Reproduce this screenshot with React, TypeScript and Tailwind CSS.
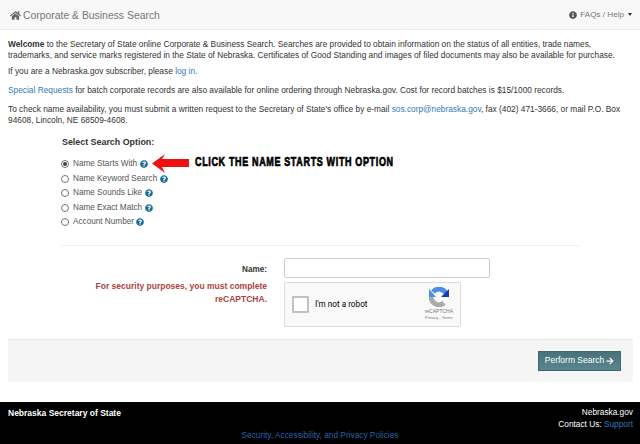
import React from "react";
import { FaHome, FaInfoCircle, FaQuestionCircle, FaArrowRight } from "react-icons/fa";

const options = ["Name Starts With", "Name Keyword Search", "Name Sounds Like", "Name Exact Match", "Account Number"];

function Option({ label, checked }: { label: string; checked?: boolean }) {
  return (
    <div className="flex h-[14.5px] items-center">
      <span className="flex h-[8px] w-[8px] items-center justify-center rounded-full border border-[#767676] bg-white">
        {checked && <span className="h-[4px] w-[4px] rounded-full bg-[#444]" />}
      </span>
      <span className="ml-[4px] text-[8.2px] leading-[14px] text-[#555]">{label}</span>
      <FaQuestionCircle className="ml-[2.5px] text-[8px] text-[#1b6d94]" />
    </div>
  );
}

export default function App() {
  return (
    <div className="relative flex h-[444px] w-[640px] flex-col overflow-hidden bg-white font-['Liberation_Sans',Arial,sans-serif] text-[8.33px] leading-[11px] text-[#333]">
      <header className="flex h-[30px] shrink-0 items-center justify-between border-b border-[#e7e7e7] bg-[#f8f8f8] pl-[10px] pr-[8px]">
        <div className="flex items-center pt-[1px] text-[10.4px] text-[#777]">
          <FaHome className="mr-[2px] text-[11px] text-[#666]" />
          <span>Corporate &amp; Business Search</span>
        </div>
        <div className="flex items-center text-[8.1px] text-[#777]">
          <FaInfoCircle className="mr-[3px] text-[8px] text-[#555]" />
          <span>FAQs / Help</span>
          <span className="ml-[4px] h-0 w-0 border-x-[2.5px] border-t-[3px] border-x-transparent border-t-[#333]" />
        </div>
      </header>

      <section className="px-[8px] pt-[9px]">
        <p>
          <b>Welcome</b> to the Secretary of State online Corporate &amp; Business Search. Searches are provided to obtain information on the status of all entities, trade names,
          <br />
          trademarks, and service marks registered in the State of Nebraska. Certificates of Good Standing and images of filed documents may also be available for purchase.
        </p>
        <p className="mt-[5px]">
          If you are a Nebraska.gov subscriber, please <a className="text-[#337ab7]">log in.</a>
        </p>
        <p className="mt-[8px]">
          <a className="text-[#337ab7]">Special Requests</a> for batch corporate records are also available for online ordering through Nebraska.gov. Cost for record batches is $15/1000 records.
        </p>
        <p className="mt-[8px]">
          To check name availability, you must submit a written request to the Secretary of State's office by e-mail <a className="text-[#337ab7]">sos.corp@nebraska.gov</a>, fax (402) 471-3666, or mail P.O. Box
          <br />
          94608, Lincoln, NE 68509-4608.
        </p>
      </section>

      <section className="relative ml-[61px] mt-[9px] w-[519px]">
        <div className="ml-[1px] text-[8.9px] font-bold leading-[14px]">Select Search Option:</div>
        <div className="mt-[8px] flex flex-col">
          {options.map((o, i) => (
            <Option key={o} label={o} checked={i === 0} />
          ))}
        </div>
        <div className="mt-[15px] border-t border-[#eee]" />
        <svg className="absolute left-[91px] top-[19px]" width="37" height="19" viewBox="0 0 37 19">
          <path d="M0 9.5 L13 0 L10 5 H37 V13 H10 L13 19 Z" fill="#ee1111" />
        </svg>
        <div className="absolute left-[134px] top-[20px] origin-left scale-x-[0.72] whitespace-nowrap text-[12.5px] font-bold leading-[14px] tracking-[0.9px] text-black [-webkit-text-stroke:0.7px_black]">
          CLICK THE NAME STARTS WITH OPTION
        </div>
      </section>

      <section className="mt-[12px] flex">
        <div className="w-[276px] shrink-0 pr-[9px] pt-[5px] text-right">
          <div className="text-[8.2px] font-bold leading-[14px]">Name:</div>
          <div className="ml-[60px] mt-[3px] text-[8.5px] font-bold leading-[13px] text-[#a94442]">
            For security purposes, you must complete reCAPTCHA.
          </div>
        </div>
        <div className="ml-[8px]">
          <div className="h-[20px] w-[206px] rounded-[2px] border border-[#ccc] bg-white" />
          <div className="mt-[4px] flex h-[45px] w-[177px] items-center rounded-[2px] border border-[#dcdcdc] bg-[#f9f9f9] pl-[7px] pr-[7px]">
            <span className="h-[17px] w-[17px] rounded-[1px] border-2 border-[#c1c1c1] bg-white" />
            <span className="ml-[6px] font-['Roboto',sans-serif] text-[8.2px] text-black">I'm not a robot</span>
            <div className="ml-auto flex flex-col items-center">
              <svg width="20" height="20" viewBox="0 0 20 20">
                <path d="M4 5 A8 8 0 0 1 17 6" fill="none" stroke="#4a90e2" strokeWidth="5" />
                <path d="M20 2 V10 H12 Z" fill="#1c3aa9" />
                <path d="M2.5 7 A8 8 0 0 0 15 16" fill="none" stroke="#ababab" strokeWidth="5" />
                <path d="M0 2 V10 H7 Z" fill="#4a90e2" />
              </svg>
              <span className="mt-[1px] text-[5px] leading-[7px] text-[#777]">reCAPTCHA</span>
              <span className="text-[4px] leading-[6px] text-[#777]">Privacy - Terms</span>
            </div>
          </div>
        </div>
      </section>

      <section className="mx-[8px] mt-[12px] flex h-[43px] w-[625px] shrink-0 items-center justify-end border-t border-[#e8e8e8] bg-[#f5f5f5] pr-[12px]">
        <button className="flex h-[20px] w-[83px] items-center justify-center gap-[2px] whitespace-nowrap border border-[#3d6a70] bg-linear-to-b from-[#47737a] to-[#5a858b] text-[8.5px] text-white">
          Perform Search <FaArrowRight className="text-[8px]" />
        </button>
      </section>

      <footer className="mt-auto flex h-[42px] shrink-0 flex-col bg-black px-[7px] pt-[4px] text-[8.3px] text-white">
        <div className="flex items-start justify-between leading-[11px]">
          <b className="ml-[1px] mt-[2px] text-[8.5px]">Nebraska Secretary of State</b>
          <div className="text-right leading-[12px]">
            <div>Nebraska.gov</div>
            <div>
              Contact Us: <a className="text-[#337ab7]">Support</a>
            </div>
          </div>
        </div>
        <a className="text-center leading-[11px] text-[#2563a8]">Security, Accessibility, and Privacy Policies</a>
      </footer>
    </div>
  );
}
